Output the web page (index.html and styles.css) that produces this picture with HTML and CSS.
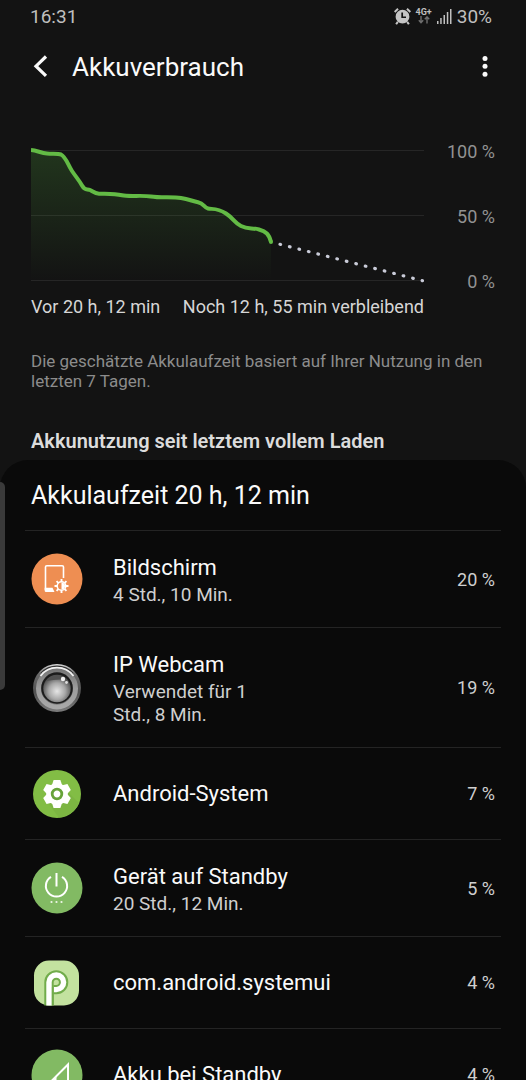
FILE: index.html
```html
<!DOCTYPE html>
<html lang="de">
<head>
<meta charset="utf-8">
<meta name="viewport" content="width=device-width, initial-scale=1">
<title>Akkuverbrauch</title>
<link rel="stylesheet" href="styles.css">
</head>
<body>
<div class="screen">
  <div class="status">
    <span>16:31</span>
    <div class="status-icons">
      <svg class="alarm" width="17" height="17" viewBox="0 0 16 16" aria-hidden="true">
        <circle cx="8" cy="8.200" r="6.500" fill="#c4c4c4"/>
        <path d="M.6 3.800 3.800 .8M15.400 3.800 12.200 .8M3.600 13l-1.600 2.300M12.400 13l1.600 2.300" stroke="#c4c4c4" stroke-width="1.900" fill="none"/>
        <path d="M7.700 4.300v4.400h3.600" stroke="#131313" stroke-width="1.600" fill="none"/>
      </svg>
      <div class="network">
        <span>4G+</span>
        <svg width="12" height="8" viewBox="0 0 12 8" fill="none" stroke="#6e6e6e" stroke-width="1.400" aria-hidden="true"><path d="M3 0v6.500M.8 4.200 3 6.600l2.200-2.400M9 7.500V1M6.800 3.300 9 .9l2.200 2.400"/></svg>
      </div>
      <svg class="signal" width="15" height="15" viewBox="0 0 15 15" fill="#bfbfbf" aria-hidden="true"><path d="M0 12h1.500v3H0zM3.200 9h1.500v6H3.200zM6.500 6H8v9H6.500zM9.800 3h1.500v12H9.800zM13 0h1.500v15H13z"/></svg>
      <span>30%</span>
    </div>
  </div>

  <header class="bar">
    <button class="icon-button" type="button" aria-label="Zurück">
      <svg width="18" height="24" viewBox="0 0 18 24" fill="none" stroke="#fafafa" stroke-width="3.200" aria-hidden="true"><path d="M14 1.500 4 11.200l10 9.700"/></svg>
    </button>
    <h1>Akkuverbrauch</h1>
    <button class="icon-button more" type="button" aria-label="Weitere Optionen">
      <svg width="18" height="24" viewBox="0 0 18 24" fill="#fafafa" aria-hidden="true"><circle cx="9" cy="3.500" r="2.500"/><circle cx="9" cy="11.300" r="2.500"/><circle cx="9" cy="19.200" r="2.500"/></svg>
    </button>
  </header>

  <section class="usage">
    <div class="chart">
      <svg class="plot" viewBox="0 0 393 137" role="img" aria-label="Akkustand">
        <defs>
          <linearGradient id="fade" x1="0" y1="0" x2="0" y2="1">
            <stop offset="0" stop-color="#5cbf45" stop-opacity=".2"/>
            <stop offset="1" stop-color="#5cbf45" stop-opacity="0"/>
          </linearGradient>
        </defs>
        <path d="M0 3.500h393M0 68.500h393M0 133.500h393" stroke="#262626"/>
        <path fill="url(#fade)" d="M0 3C6 3.500 10 6 16 6.500S27 6.500 30 7.500C35 10 37 18 41 24S48 33 51 38.500 56 41.500 59 43 64 46.500 68 46.700C78 47 84 46.800 91 48.300S112 48 120 49.500 142 49.800 150 51 161 54 167 55.200 173 60.500 177 61.500 186 60.500 195 66.500 203 75.500 210 79 221 80.500 228 82.500 238 87 240 95V134H0Z"/>
        <path fill="none" stroke="#63bb45" stroke-width="4" d="M0 3C6 3.500 10 6 16 6.500S27 6.500 30 7.500C35 10 37 18 41 24S48 33 51 38.500 56 41.500 59 43 64 46.500 68 46.700C78 47 84 46.800 91 48.300S112 48 120 49.500 142 49.800 150 51 161 54 167 55.200 173 60.500 177 61.500 186 60.500 195 66.500 203 75.500 210 79 221 80.500 228 82.500 238 87 240 95"/>
        <circle cx="240" cy="95" r="2" fill="#63bb45"/>
        <path d="M249 97.300 391.500 133.700" fill="none" stroke="#c9cbd8" stroke-width="3.200" stroke-linecap="round" stroke-dasharray=".6 9.180"/>
      </svg>
      <div class="scale"><span>100 %</span><span>50 %</span><span>0 %</span></div>
      <div class="times"><span>Vor 20 h, 12 min</span><span>Noch 12 h, 55 min verbleibend</span></div>
    </div>
    <p class="note">Die geschätzte Akkulaufzeit basiert auf Ihrer Nutzung in den letzten 7 Tagen.</p>
    <h2>Akkunutzung seit letztem vollem Laden</h2>
  </section>

  <main class="card">
    <h3>Akkulaufzeit 20 h, 12 min</h3>
    <ul class="apps">
      <li><a class="app" href="#bildschirm">
        <svg class="app-icon" viewBox="0 0 52 52" aria-hidden="true">
          <circle cx="26" cy="26" r="25.500" fill="#ee8e52"/>
          <path d="M32.500 25V14a1.300 1.300 0 0 0-1.300-1.300H15.800a1.300 1.300 0 0 0-1.300 1.300V37" fill="none" stroke="#fff" stroke-width="1.600"/>
          <path d="M13.700 34.800h7.800l2 4.300H15a1.300 1.300 0 0 1-1.300-1.300z" fill="#fff"/>
          <path d="M30.500 26v14M23.500 33h14M25.550 28.050l9.900 9.900M35.450 28.050l-9.900 9.900" stroke="#fff" stroke-width="1.900"/>
          <circle cx="30.500" cy="33" r="4.300" fill="#ee8e52" stroke="#fff" stroke-width="1.500"/>
          <path d="M30.500 29.500a3.500 3.500 0 0 1 0 7z" fill="#fff"/>
        </svg>
        <span class="label"><span class="name">Bildschirm</span><span class="detail">4 Std., 10 Min.</span></span>
        <span class="share">20 %</span>
      </a></li>
      <li><a class="app" href="#ip-webcam">
        <svg class="app-icon" viewBox="0 0 52 52" aria-hidden="true">
          <defs>
            <linearGradient id="rim" x1="0" y1="0" x2="0" y2="1"><stop offset="0" stop-color="#dedede"/><stop offset=".2" stop-color="#6a6a6a"/><stop offset=".6" stop-color="#525252"/><stop offset="1" stop-color="#7c7c7c"/></linearGradient>
            <linearGradient id="ring" x1="0" y1="0" x2="0" y2="1"><stop offset="0" stop-color="#777"/><stop offset=".5" stop-color="#9d9d9d"/><stop offset="1" stop-color="#a8a8a8"/></linearGradient>
            <radialGradient id="lens" cx=".5" cy=".6" r=".55"><stop offset="0" stop-color="#e6e6e6"/><stop offset=".55" stop-color="#a8a8a8"/><stop offset="1" stop-color="#505050"/></radialGradient>
          </defs>
          <circle cx="26" cy="26" r="24" fill="url(#rim)"/>
          <circle cx="26" cy="26.500" r="18.500" fill="none" stroke="url(#ring)" stroke-width="5"/>
          <path d="M10 11.500a21.500 21.500 0 0 1 32 0" fill="none" stroke="#333" stroke-width="1.500"/>
          <path d="M9.500 14a20.500 20.500 0 0 1 33 0" fill="none" stroke="#f1f1f1" stroke-width="1.800"/>
          <circle cx="26" cy="26" r="15.700" fill="#1b1b1b"/>
          <circle cx="26" cy="26.500" r="13.700" fill="url(#lens)"/>
          <path d="M14.700 19a13.700 13.700 0 0 1 22.600 0q-5-2-8-1.500-7 0-14.600 1.500z" fill="#505050"/>
          <circle cx="32" cy="17" r="2.200" fill="#f0f0f0"/><circle cx="35.500" cy="20.500" r="1.400" fill="#ddd"/>
        </svg>
        <span class="label"><span class="name">IP Webcam</span><span class="detail">Verwendet für 1 Std., 8 Min.</span></span>
        <span class="share">19 %</span>
      </a></li>
      <li><a class="app" href="#android-system">
        <svg class="app-icon" viewBox="0 0 52 52" aria-hidden="true">
          <circle cx="26" cy="26" r="24" fill="#82bd45"/>
          <path d="m17 35 11 14.500a24 24 0 0 0 20-14.500L37 24z" fill="#7cb542"/>
          <g fill="#fff" transform="translate(26 26)">
            <circle r="10.800"/>
            <path id="tooth" d="m-5-9 1.600-5h6.800L5-9z"/>
            <use href="#tooth" transform="rotate(60)"/><use href="#tooth" transform="rotate(120)"/><use href="#tooth" transform="rotate(180)"/><use href="#tooth" transform="rotate(240)"/><use href="#tooth" transform="rotate(300)"/>
            <circle r="4.800" stroke="#67a33a" stroke-width="2.800"/>
          </g>
        </svg>
        <span class="label"><span class="name">Android-System</span></span>
        <span class="share">7 %</span>
      </a></li>
      <li><a class="app" href="#standby">
        <svg class="app-icon" viewBox="0 0 52 52" aria-hidden="true">
          <circle cx="26" cy="26" r="25.500" fill="#82ba63"/>
          <path d="M25.500 11v13.500M20 14.900a10.600 10.600 0 1 0 11 0" fill="none" stroke="#fff" stroke-width="2"/>
          <g fill="#eef6e8"><circle cx="20.500" cy="40" r="1.100"/><circle cx="25.500" cy="40" r="1.100"/><circle cx="30.500" cy="40" r="1.100"/></g>
        </svg>
        <span class="label"><span class="name">Gerät auf Standby</span><span class="detail">20 Std., 12 Min.</span></span>
        <span class="share">5 %</span>
      </a></li>
      <li><a class="app" href="#systemui">
        <svg class="app-icon" viewBox="0 0 52 52" aria-hidden="true">
          <rect x="3" y="3.500" width="45" height="45" rx="15" fill="#c3e29f"/>
          <g fill="none">
            <path d="M18 48.500V25.300a7.300 7.300 0 1 1 7.300 7.300h-2.500" stroke="#71ac4b" stroke-width="9.400"/>
            <path d="M18 48.500V25.300a7.300 7.300 0 1 1 7.300 7.300h-2.500" stroke="#fff" stroke-width="5.400"/>
            <path d="M21.800 48V30" stroke="#71ac4b" stroke-width="1.800"/>
          </g>
        </svg>
        <span class="label"><span class="name">com.android.systemui</span></span>
        <span class="share">4 %</span>
      </a></li>
      <li><a class="app" href="#akku-standby">
        <svg class="app-icon" viewBox="0 0 52 52" aria-hidden="true">
          <circle cx="26" cy="26" r="25.500" fill="#82ba63"/>
          <path d="M37 15.500V37H15.500z" fill="none" stroke="#fff" stroke-width="2"/>
          <path d="M25.500 27v10h-10z" fill="#fff"/>
        </svg>
        <span class="label"><span class="name">Akku bei Standby</span></span>
        <span class="share">4 %</span>
      </a></li>
    </ul>
  </main>
  <div class="edge-handle"></div>
</div>
</body>
</html>
```
FILE: styles.css
```css
* {
  box-sizing: border-box;
}

body {
  margin: 0;
  background: #131313;
  color: #fafafa;
  font-family: Roboto, "Noto Sans", sans-serif;
}

h1, h2, h3, p, ul {
  margin: 0;
  padding: 0;
}

.screen {
  position: relative;
  display: flex;
  flex-direction: column;
  height: 100vh;
  overflow: hidden;
}

.status {
  display: flex;
  justify-content: space-between;
  align-items: center;
  height: 34px;
  padding: 0 34px 2px 30px;
  color: #bfbfbf;
  font-size: 19px;
}

.status-icons {
  display: flex;
  align-items: center;
  gap: 5px;
}

.network {
  display: flex;
  flex-direction: column;
  align-items: center;
  font-size: 9px;
  font-weight: 700;
  line-height: 8px;
}

.bar {
  display: flex;
  align-items: center;
  height: 66px;
  padding: 0 32px;
}

.icon-button {
  display: flex;
  padding: 0;
  border: 0;
  background: none;
}

.bar h1 {
  flex: 1;
  padding-left: 22px;
  font-size: 26px;
  font-weight: 400;
  line-height: 32px;
}

.usage {
  padding: 42px 31px 8px;
}

.chart {
  display: grid;
  grid-template-columns: 1fr 71px;
  row-gap: 4px;
  align-items: center;
}

.plot {
  display: block;
  width: 100%;
  padding-bottom: 3px;
}

.scale {
  display: flex;
  flex-direction: column;
  justify-content: space-between;
  height: 150px;
  color: #929292;
  font-size: 18px;
  line-height: 20px;
  text-align: right;
}

.times {
  display: flex;
  justify-content: space-between;
  color: #d6d6d6;
  font-size: 18px;
  line-height: 22px;
  white-space: nowrap;
}

.note {
  padding-top: 33px;
  color: #8c8c8c;
  font-size: 17px;
  line-height: 20px;
}

.usage h2 {
  padding-top: 39px;
  color: #dcdcdc;
  font-size: 20px;
  font-weight: 600;
  line-height: 22px;
}

.card {
  flex: 1;
  min-height: 0;
  overflow: hidden;
  padding: 0 25px;
  border-radius: 28px 28px 0 0;
  background: #0a0a0a;
}

.card h3 {
  padding: 20px 6px 18px;
  font-size: 25px;
  font-weight: 400;
  line-height: 32px;
}

.apps {
  list-style: none;
}

.app {
  display: flex;
  align-items: center;
  min-height: 92px;
  padding: 19px 6px;
  border-top: 1px solid #242424;
  color: inherit;
  text-decoration: none;
}

.app-icon {
  flex: none;
  width: 52px;
  height: 52px;
}

.label {
  display: flex;
  flex: 1;
  flex-direction: column;
  padding: 2px 0 2px 30px;
}

.name {
  font-size: 22px;
  line-height: 31px;
}

.detail {
  max-width: 160px;
  color: #cfcfcf;
  font-size: 19px;
  line-height: 23px;
}

.share {
  color: #cfcfcf;
  font-size: 18px;
}

.edge-handle {
  position: absolute;
  top: 482px;
  left: 0;
  width: 5px;
  height: 208px;
  border-radius: 0 5px 5px 0;
  background: #3a3a3a;
}
```
